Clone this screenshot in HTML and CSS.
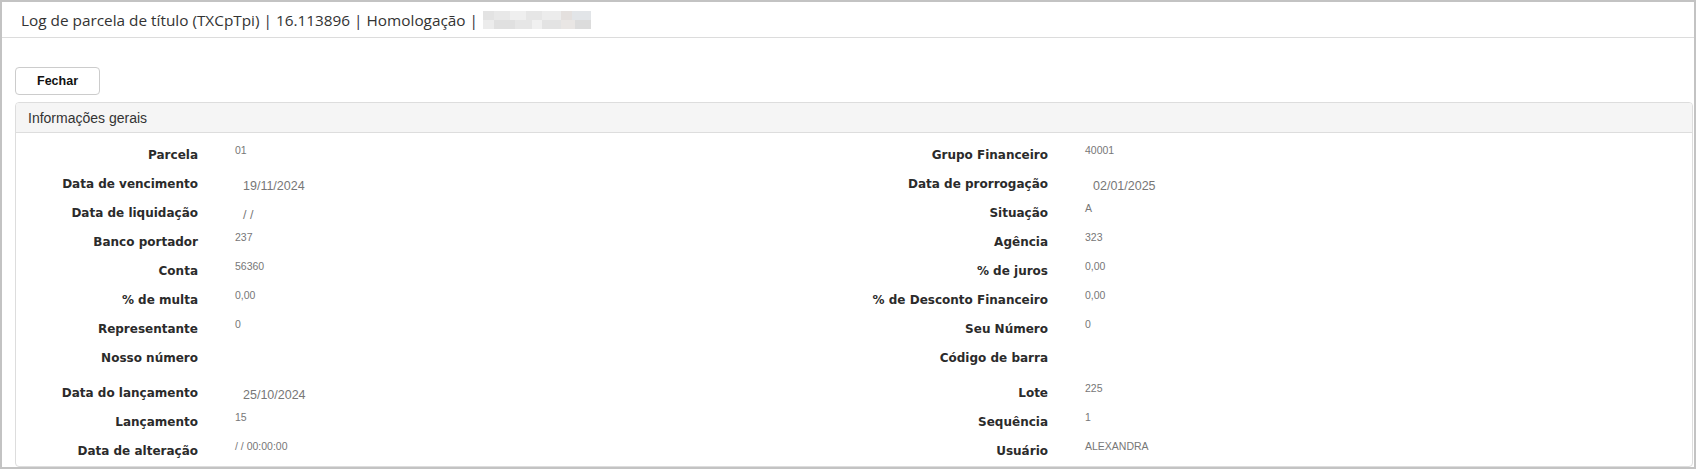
FILE: index.html
```html
<!DOCTYPE html>
<html lang="pt-BR">
<head>
<meta charset="utf-8">
<title>Log de parcela de título</title>
<link rel="stylesheet" href="styles.css">
</head>
<body>
<div class="frame">
  <div class="topbar">
    <span class="title">Log de parcela de título (TXCpTpi) | 16.113896 | Homologação |</span>
    <span class="blur"></span>
  </div>
  <div class="content">
    <button class="btn" type="button">Fechar</button>
    <div class="panel">
      <div class="panel-heading">Informações gerais</div>
      <div class="panel-body">
        <div class="col">
          <div class="row"><span class="lbl">Parcela</span><span class="val">01</span></div>
          <div class="row"><span class="lbl">Data de vencimento</span><span class="val date">19/11/2024</span></div>
          <div class="row"><span class="lbl">Data de liquidação</span><span class="val date">/ /</span></div>
          <div class="row"><span class="lbl">Banco portador</span><span class="val">237</span></div>
          <div class="row"><span class="lbl">Conta</span><span class="val">56360</span></div>
          <div class="row"><span class="lbl">% de multa</span><span class="val">0,00</span></div>
          <div class="row"><span class="lbl">Representante</span><span class="val">0</span></div>
          <div class="row tall"><span class="lbl">Nosso número</span><span class="val"></span></div>
          <div class="row"><span class="lbl">Data do lançamento</span><span class="val date">25/10/2024</span></div>
          <div class="row"><span class="lbl">Lançamento</span><span class="val">15</span></div>
          <div class="row"><span class="lbl">Data de alteração</span><span class="val">/ / 00:00:00</span></div>
        </div>
        <div class="col">
          <div class="row"><span class="lbl">Grupo Financeiro</span><span class="val">40001</span></div>
          <div class="row"><span class="lbl">Data de prorrogação</span><span class="val date">02/01/2025</span></div>
          <div class="row"><span class="lbl">Situação</span><span class="val">A</span></div>
          <div class="row"><span class="lbl">Agência</span><span class="val">323</span></div>
          <div class="row"><span class="lbl">% de juros</span><span class="val">0,00</span></div>
          <div class="row"><span class="lbl">% de Desconto Financeiro</span><span class="val">0,00</span></div>
          <div class="row"><span class="lbl">Seu Número</span><span class="val">0</span></div>
          <div class="row tall"><span class="lbl">Código de barra</span><span class="val"></span></div>
          <div class="row"><span class="lbl">Lote</span><span class="val">225</span></div>
          <div class="row"><span class="lbl">Sequência</span><span class="val">1</span></div>
          <div class="row"><span class="lbl">Usuário</span><span class="val">ALEXANDRA</span></div>
        </div>
      </div>
    </div>
  </div>
</div>
</body>
</html>
```

FILE: styles.css
```css
html, body {
  margin: 0;
  padding: 0;
  background: #fff;
}

.frame {
  box-sizing: border-box;
  width: 1696px;
  height: 469px;
  border: 2px solid #c3c3c3;
  overflow: hidden;
  background: #fff;
}

.topbar {
  height: 35px;
  border-bottom: 1px solid #dcdcdc;
  display: flex;
  align-items: center;
  padding-left: 19px;
}

.title {
  font-family: "Open Sans", "Liberation Sans", sans-serif;
  font-size: 15.35px;
  color: #333;
  white-space: nowrap;
}

.blur {
  display: inline-block;
  width: 108px;
  height: 18px;
  margin-left: 5px;
  background:
    linear-gradient(90deg, #e3e3e3 0 10%, #e8e8e8 10% 25%, #efefef 25% 40%, #e6e6e6 40% 55%, #ececec 55% 72%, #e4e0de 72% 82%, #e2e5e8 82% 100%) top / 100% 50% no-repeat,
    linear-gradient(90deg, #ececec 0 10%, #e0e0e0 10% 30%, #e6e6e6 30% 45%, #f0f0f0 45% 55%, #e3e3e3 55% 72%, #e9e6e4 72% 85%, #dcdcdc 85% 100%) bottom / 100% 50% no-repeat;
}

.content {
  padding: 29px 1px 0 13px;
}

.btn {
  display: block;
  box-sizing: border-box;
  width: 85px;
  height: 28px;
  border: 1px solid #cccccc;
  border-radius: 4px;
  background: #fff;
  font-family: "Liberation Sans", Arial, sans-serif;
  font-weight: bold;
  font-size: 12.5px;
  color: #111;
  padding: 0;
  margin: 0;
}

.panel {
  margin-top: 7px;
  border: 1px solid #dddddd;
  border-radius: 4px;
}

.panel-heading {
  height: 29px;
  background: #f5f5f5;
  border-bottom: 1px solid #dddddd;
  border-radius: 3px 3px 0 0;
  display: flex;
  align-items: center;
  padding-left: 12px;
  font-family: "Liberation Sans", Arial, sans-serif;
  font-size: 14px;
  color: #333;
}

.panel-body {
  display: grid;
  grid-template-columns: 850px 1fr;
  padding-top: 7.5px;
}

.row {
  display: flex;
  align-items: center;
  height: 29px;
}

.row.tall {
  margin-bottom: 6px;
}

.lbl {
  width: 182px;
  flex: none;
  text-align: right;
  font-family: "DejaVu Sans", Verdana, sans-serif;
  font-weight: bold;
  font-size: 12px;
  line-height: 14px;
  color: #2b2b2b;
  white-space: nowrap;
}

.val {
  margin-left: 37px;
  align-self: flex-start;
  margin-top: 2.5px;
  font-family: "Liberation Sans", Arial, sans-serif;
  font-size: 10.5px;
  line-height: 14px;
  color: #777;
  white-space: nowrap;
}

.val.date {
  align-self: center;
  margin-top: 3px;
  padding-left: 8px;
  font-size: 12.5px;
  line-height: 16px;
}
```
